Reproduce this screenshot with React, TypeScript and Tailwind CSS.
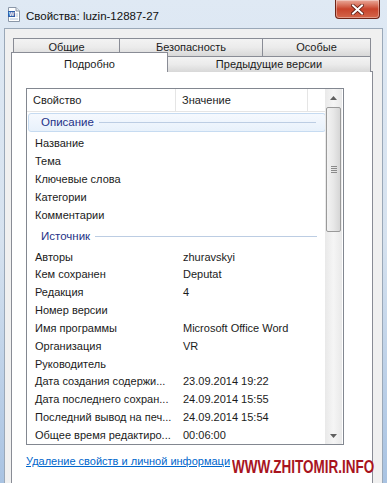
import React from 'react';

const font = { fontFamily: '"Liberation Sans", Arial, sans-serif' };

const groupDescription = ['Название', 'Тема', 'Ключевые слова', 'Категории', 'Комментарии'];

const groupSource: [string, string][] = [
  ['Авторы', 'zhuravskyi'],
  ['Кем сохранен', 'Deputat'],
  ['Редакция', '4'],
  ['Номер версии', ''],
  ['Имя программы', 'Microsoft Office Word'],
  ['Организация', 'VR'],
  ['Руководитель', ''],
  ['Дата создания содержи...', '23.09.2014 19:22'],
  ['Дата последнего сохран...', '24.09.2014 15:55'],
  ['Последний вывод на печ...', '24.09.2014 15:54'],
  ['Общее время редактиро...', '00:06:00'],
];

const WordIcon = () => (
  <svg width="12" height="15" viewBox="0 0 12 15">
    <path d="M0.5 0.5h7.5l3.5 3.5v10.5h-11z" fill="#fff" stroke="#8a97a8" />
    <path d="M8 0.5v3.5h3.5" fill="#e4e9ef" stroke="#8a97a8" />
    <rect x="0" y="4" width="7" height="6" fill="#2f5ea8" />
    <text x="3.5" y="9" fontSize="5.5" fill="#fff" textAnchor="middle" fontFamily="Liberation Sans" fontWeight="bold">W</text>
    <path d="M7.5 7h2.5M7.5 9h2.5M2 12h8" stroke="#9fb3cc" strokeWidth="0.8" />
  </svg>
);

const Row = ({ name, value }: { name: string; value?: string }) => (
  <div className="flex h-[18px] items-center text-[11px] text-[#1b1b1b]">
    <div className="w-[149px] pl-[8px] whitespace-nowrap overflow-hidden">{name}</div>
    <div className="pl-[7px] whitespace-nowrap">{value}</div>
  </div>
);

const Tab = ({ label, w }: { label: string; w: string }) => (
  <div
    className={`${w} h-full flex items-center justify-center border border-[#898c95] border-b-0 -ml-px first:ml-0 bg-gradient-to-b from-[#f3f3f3] via-[#ebebeb] to-[#d8d8d8] text-[11px] text-[#1b1b1b]`}
  >
    {label}
  </div>
);

export default function App() {
  return (
    <div
      style={font}
      className="w-[387px] h-[483px] overflow-hidden flex flex-col bg-gradient-to-b from-[#dfe9f4] via-[#d6e2ef] to-[#a9c3e2]"
    >
      {/* title bar */}
      <div className="h-[28px] shrink-0 flex items-start relative">
        <div className="pl-[8px] pt-[7px]">
          <WordIcon />
        </div>
        <div className="pl-[6px] pt-[8px] text-[11.5px] text-[#111]">Свойства: luzin-12887-27</div>
        <div className="absolute left-[335px] top-0 w-[45px] h-[19px] rounded-b-[4px] border border-t-0 border-[#6e2416] bg-gradient-to-b from-[#e9a99a] via-[#c8432b] to-[#d4664a] flex items-center justify-center shadow-[inset_0_0_0_1px_rgba(255,255,255,0.35)]">
          <svg width="13" height="11" viewBox="0 0 13 11">
            <path d="M2 1.5l9 8M11 1.5l-9 8" stroke="#5a1a10" strokeWidth="3.6" strokeLinecap="square" />
            <path d="M2 1.5l9 8M11 1.5l-9 8" stroke="#fff" strokeWidth="2" strokeLinecap="square" />
          </svg>
        </div>
      </div>

      {/* client area */}
      <div className="flex-1 ml-[4px] mr-[4px] border-l border-t border-r border-[#9aa8b8] bg-[#f0f0f0] pl-[6px] pt-[9px]">
        {/* tabs */}
        <div className="w-[361px]">
          <div className="flex h-[18px] ml-[2px]">
            <Tab label="Общие" w="w-[107px]" />
            <Tab label="Безопасность" w="w-[144px]" />
            <Tab label="Особые" w="w-[109px]" />
          </div>
          <div className="flex h-[16px] items-end relative z-10">
            <div className="w-[157px] h-[20px] -mt-[4px] bg-white border border-[#898c95] border-b-0 flex items-start justify-center pt-[3px] text-[11px] text-[#1b1b1b]">
              Подробно
            </div>
            <div className="w-[204px] h-[16px] -ml-px border border-[#898c95] border-b-0 bg-gradient-to-b from-[#f3f3f3] via-[#ebebeb] to-[#d8d8d8] flex items-center justify-center text-[11px] text-[#1b1b1b]">
              Предыдущие версии
            </div>
          </div>

          {/* panel */}
          <div className="w-[362px] h-[420px] -mt-px bg-white border border-[#898c95] pl-[14px] pt-[16px]">
            <div className="w-[318px] h-[357px] border border-[#828790] flex">
              <div className="w-[298px] flex flex-col overflow-hidden">
                {/* header */}
                <div className="h-[23px] shrink-0 flex text-[11px] text-[#1b1b1b] border-b border-[#e5e5e5]">
                  <div className="w-[149px] pl-[6px] flex items-center border-r border-[#e5e5e5]">Свойство</div>
                  <div className="w-[132px] pl-[6px] flex items-center border-r border-[#e5e5e5]">Значение</div>
                </div>

                {/* Описание group */}
                <div className="mt-[1px] ml-[1px] w-[298px] h-[19px] shrink-0 rounded-[3px] border border-[#c6dbf1] bg-gradient-to-b from-[#f5f9fe] to-[#e8f1fb] flex items-center pl-[12px] pr-[9px]">
                  <span className="text-[11.5px] text-[#1e3287]">Описание</span>
                  <div className="flex-1 h-px bg-[#bccde3] ml-[5px]" />
                </div>
                <div className="mt-[2px]">
                  {groupDescription.map((n) => (
                    <Row key={n} name={n} />
                  ))}
                </div>

                {/* Источник group */}
                <div className="h-[24px] shrink-0 flex items-center pl-[14px] pr-[8px] pt-[1px]">
                  <span className="text-[11.5px] text-[#1e3287]">Источник</span>
                  <div className="flex-1 h-px bg-[#bccde3] ml-[5px]" />
                </div>
                {groupSource.map(([n, v]) => (
                  <Row key={n} name={n} value={v} />
                ))}
              </div>

              {/* scrollbar */}
              <div className="w-[17px] h-full bg-gradient-to-r from-[#e9e9e9] via-[#f5f5f5] to-[#e9e9e9] flex flex-col items-center">
                <div className="h-[17px] w-full flex items-center justify-center">
                  <svg width="7" height="4" viewBox="0 0 7 4">
                    <path d="M0 4L3.5 0L7 4z" fill="#606060" />
                  </svg>
                </div>
                <div className="mt-[1px] w-[15px] h-[125px] rounded-[2px] border border-[#9a9a9a] bg-gradient-to-r from-[#f3f3f3] via-[#e8e8e8] to-[#d6d6d6] flex flex-col items-center justify-center gap-[1px]">
                  <div className="w-[6px] h-px bg-[#8a8a8a]" />
                  <div className="w-[6px] h-px bg-[#8a8a8a]" />
                  <div className="w-[6px] h-px bg-[#8a8a8a]" />
                  <div className="w-[6px] h-px bg-[#8a8a8a]" />
                </div>
                <div className="flex-1" />
                <div className="h-[17px] w-full flex items-center justify-center">
                  <svg width="7" height="4" viewBox="0 0 7 4">
                    <path d="M0 0L3.5 4L7 0z" fill="#606060" />
                  </svg>
                </div>
              </div>
            </div>

            {/* link + watermark */}
            <div className="flex items-center h-[20px] mt-[6px]">
              <span className="text-[11px] text-[#0066cc] underline whitespace-nowrap">
                Удаление свойств и личной информаци
              </span>
              <span className="w-[145px] ml-[2px] mt-[11px] h-[22px] flex items-center">
                <span className="text-[19px] font-bold text-[#a8141e] whitespace-nowrap inline-block origin-left scale-x-[0.71] leading-none">
                  WWW.ZHITOMIR.INFO
                </span>
              </span>
            </div>
          </div>
        </div>
      </div>
    </div>
  );
}
